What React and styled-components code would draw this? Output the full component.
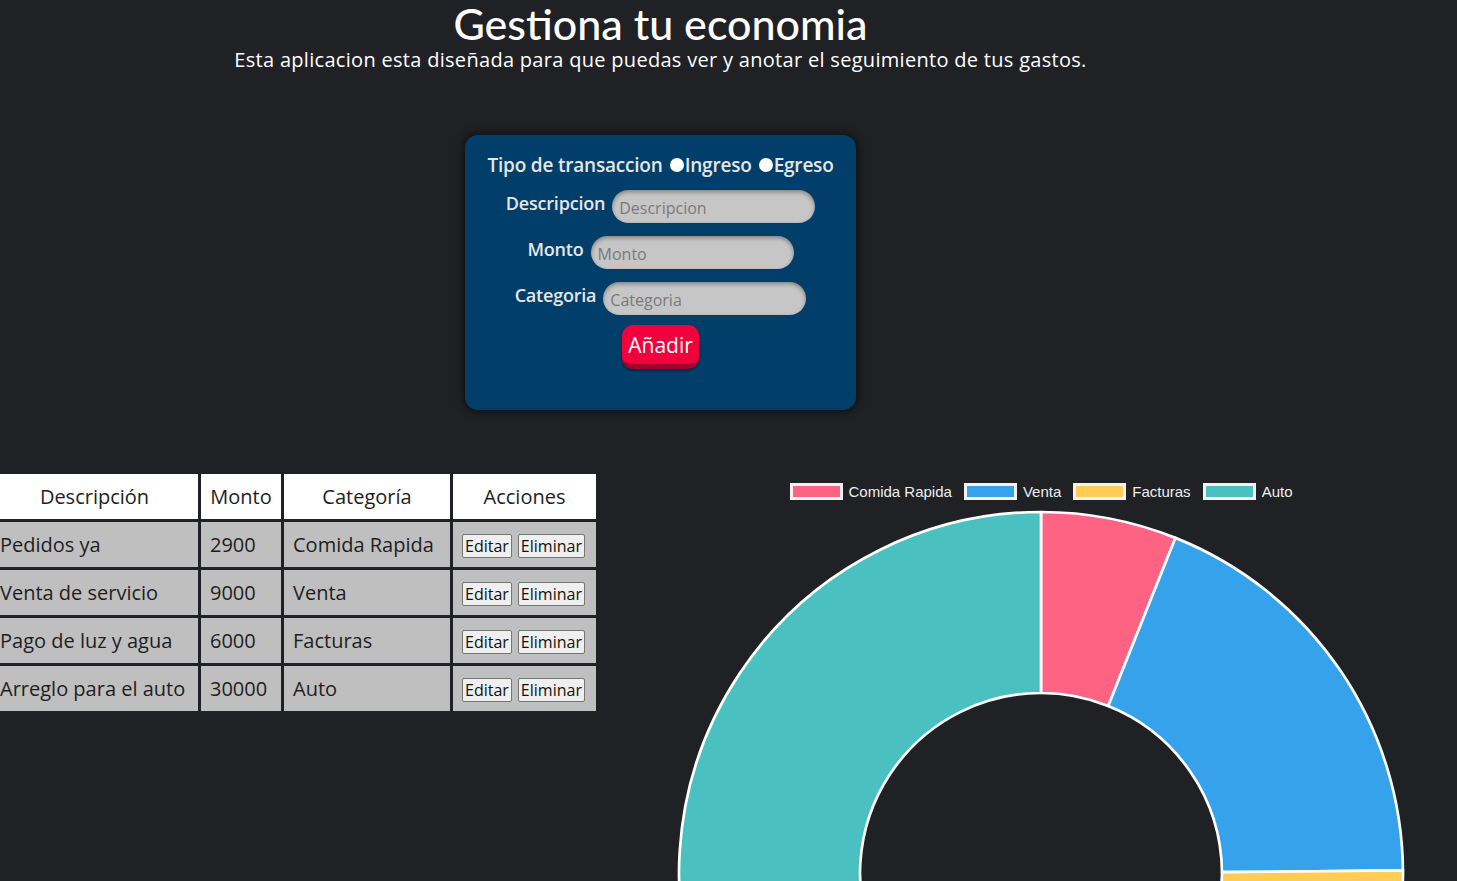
import React from 'react';
import styled, { createGlobalStyle } from 'styled-components';

const GlobalStyle = createGlobalStyle`
  html, body {
    margin: 0;
    overflow: hidden;
    background: #202125;
  }

  body {
    font-family: "Open Sans", Lato, sans-serif;
    color: #fff;
  }
`;

const TRANSACTIONS = [
  { desc: 'Pedidos ya', monto: 2900, cat: 'Comida Rapida' },
  { desc: 'Venta de servicio', monto: 9000, cat: 'Venta' },
  { desc: 'Pago de luz y agua', monto: 6000, cat: 'Facturas' },
  { desc: 'Arreglo para el auto', monto: 30000, cat: 'Auto' },
];

const COLORS = {
  'Comida Rapida': '#ff6384',
  Venta: '#36a2eb',
  Facturas: '#ffcd56',
  Auto: '#4bc0c0',
};

const FIELDS = ['Descripcion', 'Monto', 'Categoria'];

const Top = styled.header`
  width: 1321px;
  display: flex;
  flex-direction: column;
  align-items: center;
  text-align: center;
`;

const Title = styled.h1`
  margin: 0;
  font-family: Lato, sans-serif;
  font-size: 43px;
  line-height: 48px;
  font-weight: 500;
`;

const Subtitle = styled.p`
  margin: -2px 0 0;
  font-size: 20px;
  line-height: 27px;
  letter-spacing: 0.3px;
`;

const Card = styled.form`
  margin-top: 62px;
  width: 391px;
  height: 275px;
  box-sizing: border-box;
  padding: 18px 0 0;
  background: #013f6a;
  border-radius: 13px;
  box-shadow: 0 0 8px 2px rgba(0, 0, 0, 0.55);
  display: flex;
  flex-direction: column;
  align-items: center;
  gap: 13px;
  color: #e6e6e6;
`;

const RadioRow = styled.div`
  display: flex;
  align-items: center;
  font-size: 19px;
  font-weight: 600;
  letter-spacing: -0.2px;
  height: 24px;
`;

const Radio = styled.span`
  display: inline-block;
  width: 14px;
  height: 14px;
  border-radius: 50%;
  background: #fff;
  margin: 0 1px 0 ${(p) => p.$gap}px;
`;

const Field = styled.div`
  display: flex;
  align-items: flex-start;
  gap: 7px;
`;

const Label = styled.label`
  font-size: 18px;
  font-weight: 600;
  letter-spacing: -0.2px;
  line-height: 26px;
`;

const Input = styled.input`
  width: 203px;
  height: 33px;
  box-sizing: border-box;
  border: none;
  border-radius: 17px;
  background: #c6c6c6;
  box-shadow: inset 0 2px 4px rgba(0, 0, 0, 0.35);
  padding: 3px 7px 0;
  font-family: "Open Sans", sans-serif;
  font-size: 16px;
  outline: none;

  &::placeholder {
    color: #7a7a7a;
  }
`;

const AddButton = styled.button`
  margin-top: -3px;
  height: 44px;
  padding: 0 6px;
  border: none;
  border-bottom: 5px solid #a3002e;
  border-radius: 11px;
  background: #f0003c;
  color: #fff;
  font-family: "Open Sans", sans-serif;
  font-size: 21px;
  box-shadow: 0 2px 3px rgba(0, 0, 0, 0.4);
`;

const Bottom = styled.section`
  margin-top: 61px;
  display: flex;
  align-items: flex-start;
`;

const Table = styled.table`
  margin-left: -12px;
  border-collapse: separate;
  border-spacing: 3px 3px;
  font-size: 20px;
  color: #1e1e22;
  flex-shrink: 0;
`;

const Th = styled.th`
  height: 45px;
  padding: 0 9px;
  background: #fff;
  font-weight: 500;
  width: ${(p) => p.$w}px;
  box-sizing: border-box;
  white-space: nowrap;
`;

const Td = styled.td`
  height: 45px;
  padding: 0 9px;
  background: #bfbfbf;
  white-space: nowrap;
`;

const SmallButton = styled.button`
  font-family: "Open Sans", sans-serif;
  font-size: 16px;
  padding: 0 2px;
  margin-right: 6px;
  background: #efefef;
  border: 1px solid #767676;
  border-radius: 2px;
  color: #111;

  &:last-child {
    margin-right: 0;
  }
`;

const ChartBox = styled.div`
  margin-left: 72px;
  display: flex;
  flex-direction: column;
  align-items: center;
  width: 740px;
`;

const Legend = styled.ul`
  list-style: none;
  margin: 11px 0 0;
  padding: 0;
  display: flex;
  gap: 12px;
  height: 22px;
  font-family: "Liberation Sans", Arial, sans-serif;
  font-size: 15px;
  color: #eee;
`;

const LegendItem = styled.li`
  display: flex;
  align-items: center;
  gap: 6px;
  height: 18px;
`;

const Swatch = styled.span`
  width: 53px;
  height: 17px;
  box-sizing: border-box;
  border: 3px solid #f2f2f2;
  background: ${(p) => p.$color};
`;

const arcPath = (cx, cy, R, r, a0, a1) => {
  const pt = (rad, a) => [cx + rad * Math.sin(a), cy - rad * Math.cos(a)];
  const large = a1 - a0 > Math.PI ? 1 : 0;
  const [x0, y0] = pt(R, a0);
  const [x1, y1] = pt(R, a1);
  const [x2, y2] = pt(r, a1);
  const [x3, y3] = pt(r, a0);
  return `M${x0} ${y0} A${R} ${R} 0 ${large} 1 ${x1} ${y1} L${x2} ${y2} A${r} ${r} 0 ${large} 0 ${x3} ${y3} Z`;
};

const Doughnut = () => {
  const total = TRANSACTIONS.reduce((s, t) => s + t.monto, 0);
  let angle = 0;
  const cx = 370;
  const cy = 370;

  return (
    <svg width="740" height="740" viewBox="0 0 740 740">
      {TRANSACTIONS.map((t) => {
        const a0 = angle;
        const a1 = angle + (t.monto / total) * Math.PI * 2;
        angle = a1;
        return (
          <path
            key={t.cat}
            d={arcPath(cx, cy, 362, 181, a0, a1)}
            fill={COLORS[t.cat]}
            stroke="#fff"
            strokeWidth="2.7"
            strokeLinejoin="round"
          />
        );
      })}
    </svg>
  );
};

const App = () => {
  return (
    <>
      <GlobalStyle />
      <Top>
        <Title>Gestiona tu economia</Title>
        <Subtitle>
          Esta aplicacion esta diseñada para que puedas ver y anotar el seguimiento de tus gastos.
        </Subtitle>

        <Card onSubmit={(e) => e.preventDefault()}>
          <RadioRow>
            Tipo de transaccion
            <Radio $gap={7} />Ingreso
            <Radio $gap={7} />Egreso
          </RadioRow>

          {FIELDS.map((f) => (
            <Field key={f}>
              <Label>{f}</Label>
              <Input placeholder={f} />
            </Field>
          ))}

          <AddButton type="submit">Añadir</AddButton>
        </Card>
      </Top>

      <Bottom>
        <Table>
          <thead>
            <tr>
              <Th $w={207}>Descripción</Th>
              <Th $w={80}>Monto</Th>
              <Th $w={166}>Categoría</Th>
              <Th $w={143}>Acciones</Th>
            </tr>
          </thead>
          <tbody>
            {TRANSACTIONS.map((t) => (
              <tr key={t.desc}>
                <Td>{t.desc}</Td>
                <Td>{t.monto}</Td>
                <Td>{t.cat}</Td>
                <Td>
                  <SmallButton>Editar</SmallButton>
                  <SmallButton>Eliminar</SmallButton>
                </Td>
              </tr>
            ))}
          </tbody>
        </Table>

        <ChartBox>
          <Legend>
            {TRANSACTIONS.map((t) => (
              <LegendItem key={t.cat}>
                <Swatch $color={COLORS[t.cat]} />
                {t.cat}
              </LegendItem>
            ))}
          </Legend>
          <Doughnut />
        </ChartBox>
      </Bottom>
    </>
  );
};

export default App;
